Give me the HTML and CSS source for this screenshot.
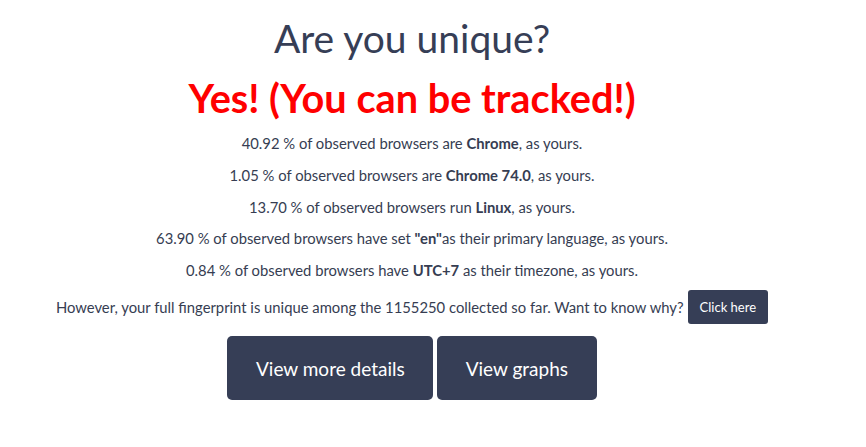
FILE: index.html
```html
<!DOCTYPE html>
<html lang="en">
<head>
<meta charset="utf-8">
<title>Are you unique?</title>
<link rel="stylesheet" href="styles.css">
</head>
<body>
<main class="page">
  <h1 class="title">Are you unique?</h1>
  <h2 class="verdict">Yes! (You can be tracked!)</h2>
  <p class="stat">40.92 % of observed browsers are <strong>Chrome</strong>, as yours.</p>
  <p class="stat">1.05 % of observed browsers are <strong>Chrome 74.0</strong>, as yours.</p>
  <p class="stat">13.70 % of observed browsers run <strong>Linux</strong>, as yours.</p>
  <p class="stat">63.90 % of observed browsers have set <strong>"en"</strong>as their primary language, as yours.</p>
  <p class="stat">0.84 % of observed browsers have <strong>UTC+7</strong> as their timezone, as yours.</p>
  <div class="why">
    <span>However, your full fingerprint is unique among the 1155250 collected so far. Want to know why?</span>
    <a class="btn-small" href="#">Click here</a>
  </div>
  <div class="actions">
    <a class="btn-big" href="#">View more details</a>
    <a class="btn-big" href="#">View graphs</a>
  </div>
</main>
</body>
</html>
```
FILE: styles.css
```css
html, body {
  margin: 0;
  padding: 0;
  background: #ffffff;
}
body {
  font-family: Lato, "Open Sans", sans-serif;
  color: #363d52;
}
.page {
  width: 824px;
  display: flex;
  flex-direction: column;
  align-items: center;
  text-align: center;
  padding-top: 14px;
}
.title {
  margin: 0;
  font-size: 39px;
  font-weight: 400;
  line-height: 48px;
  color: #363e56;
}
.verdict {
  margin: 12px 0 0;
  font-size: 39.7px;
  font-weight: 700;
  line-height: 48px;
  color: #ff0000;
}
.stat {
  margin: 11px 0 0;
  font-size: 14.8px;
  line-height: 20px;
}
.stat + .stat {
  margin-top: 11.75px;
}
.stat strong {
  font-weight: 700;
}
.why {
  margin-top: 10px;
  display: flex;
  align-items: center;
  gap: 4px;
  font-size: 14.8px;
  line-height: 20px;
}
.btn-small {
  display: inline-flex;
  align-items: center;
  height: 34px;
  padding: 0 12px;
  box-sizing: border-box;
  border-radius: 3px;
  background: #363e56;
  color: #ffffff;
  font-size: 13px;
  text-decoration: none;
}
.actions {
  margin-top: 12px;
  display: flex;
  gap: 4px;
}
.btn-big {
  display: inline-flex;
  align-items: center;
  height: 64px;
  padding: 0 28.5px;
  box-sizing: border-box;
  border-radius: 5px;
  background: #363e56;
  color: #ffffff;
  font-size: 19px;
  text-decoration: none;
}
```
